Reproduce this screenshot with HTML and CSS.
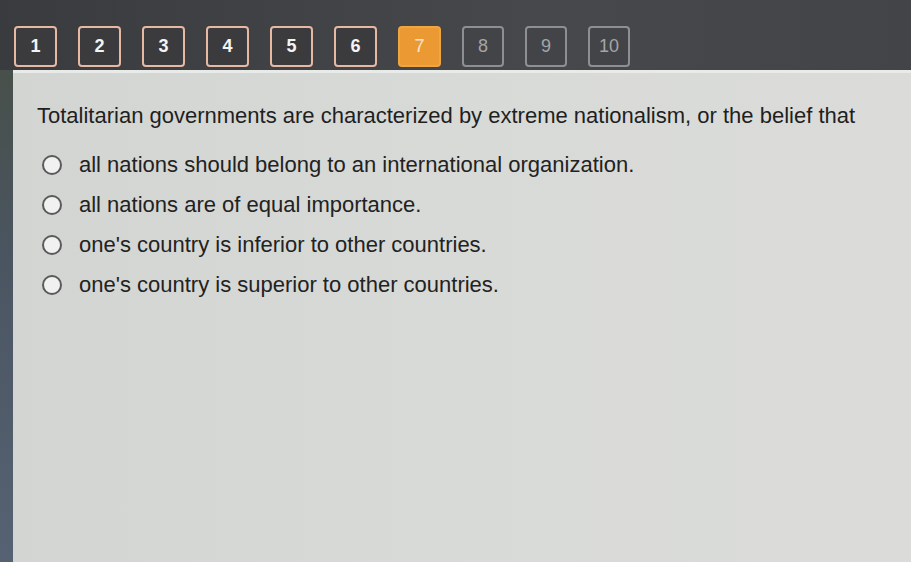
FILE: index.html
```html
<!DOCTYPE html>
<html>
<head>
<meta charset="utf-8">
<link rel="stylesheet" href="styles.css">
</head>
<body>
<div class="topbar">
  <div class="nav">
    <span class="btn done">1</span>
    <span class="btn done">2</span>
    <span class="btn done">3</span>
    <span class="btn done">4</span>
    <span class="btn done">5</span>
    <span class="btn done">6</span>
    <span class="btn current">7</span>
    <span class="btn todo">8</span>
    <span class="btn todo">9</span>
    <span class="btn todo">10</span>
  </div>
</div>
<div class="main">
  <div class="strip"></div>
  <div class="panel">
    <p class="question">Totalitarian governments are characterized by extreme nationalism, or the belief that</p>
    <ul class="options">
      <li><span class="radio"></span>all nations should belong to an international organization.</li>
      <li><span class="radio"></span>all nations are of equal importance.</li>
      <li><span class="radio"></span>one's country is inferior to other countries.</li>
      <li><span class="radio"></span>one's country is superior to other countries.</li>
    </ul>
  </div>
</div>
</body>
</html>
```
FILE: styles.css
```css
html, body {
  margin: 0;
  padding: 0;
  height: 100%;
}
body {
  background: #3f4043;
  font-family: "Liberation Sans", Arial, sans-serif;
  display: flex;
  flex-direction: column;
  overflow: hidden;
}
.topbar {
  height: 70px;
  background: linear-gradient(90deg, #3a3b3e 0%, #47484c 60%, #434447 100%);
  box-sizing: border-box;
  padding: 26px 0 0 14px;
  flex: none;
}
.nav {
  display: flex;
  gap: 21px;
}
.btn {
  width: 43px;
  height: 41px;
  box-sizing: border-box;
  border-radius: 4px;
  display: flex;
  align-items: center;
  justify-content: center;
  font-size: 18px;
}
.btn.done {
  border: 2px solid #e6b9a3;
  background: #3b3b3d;
  color: #f4f4f4;
  font-weight: bold;
}
.btn.current {
  background: #eb9a33;
  border: 2px solid #f0a640;
  color: #f7e6cf;
}
.btn.todo {
  border: 2px solid #8e8f92;
  background: #434447;
  color: #a4a5a8;
  width: 42px;
}
.main {
  flex: 1;
  display: flex;
}
.strip {
  width: 13px;
  background: linear-gradient(180deg, #47504a 0%, #4b5562 40%, #566273 100%);
  flex: none;
}
.panel {
  flex: 1;
  background: linear-gradient(90deg, #d3d5d2 0%, #d8dad7 50%, #dbdcd9 100%);
  border-top: 3px solid #e9ebe9;
  padding: 30px 0 0 24px;
}
.question {
  margin: 0 0 16px 0;
  font-size: 22px;
  color: #1f1f1f;
  white-space: nowrap;
}
.options {
  list-style: none;
  margin: 0;
  padding: 0 0 0 5px;
}
.options li {
  display: flex;
  align-items: center;
  height: 40px;
  font-size: 22px;
  color: #222;
}
.radio {
  width: 20px;
  height: 20px;
  box-sizing: border-box;
  border: 2px solid #5a5a5a;
  border-radius: 50%;
  background: #f1f1f1;
  margin-right: 17px;
  flex: none;
}
```
